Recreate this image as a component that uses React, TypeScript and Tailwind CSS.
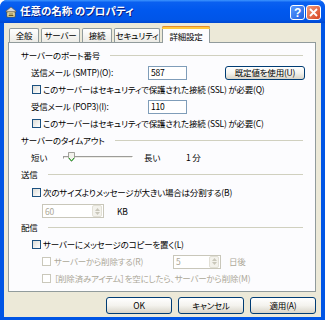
import React from "react";

function Check({ disabled }: { disabled?: boolean }) {
  return (
    <span
      className={
        disabled
          ? "inline-block w-[9px] h-[9px] shrink-0 border border-[#CAC8BB] bg-white"
          : "inline-block w-[9px] h-[9px] shrink-0 border border-[#1C5180] bg-gradient-to-br from-[#DCDCD7] to-white"
      }
    />
  );
}

function GroupHeader({ label, h }: { label: string; h: string }) {
  return (
    <div className={"flex items-center pl-[12px] pr-[12px] " + h}>
      <span className="whitespace-nowrap">{label}</span>
      <div className="flex-1 h-px bg-[#D0D0BF] ml-[10px]" />
    </div>
  );
}

function XPButton({ label, w }: { label: string; w: string }) {
  return (
    <div
      className={
        "rounded-[3px] border border-[#003C74] bg-gradient-to-b from-white via-[#F4F3EE] to-[#D8D4C8] flex items-center justify-center whitespace-nowrap " +
        w
      }
    >
      {label}
    </div>
  );
}

function Spinner({ value, w }: { value: string; w: string }) {
  return (
    <div className={"h-[14px] border border-[#C9C7BA] bg-white flex items-center " + w}>
      <span className="flex-1 pl-[2px] text-[#ACA899]">{value}</span>
      <div className="w-[10px] h-[12px] mr-px bg-[#F3F2EC] border border-[#E2E0D6] rounded-[2px] flex flex-col items-center justify-center gap-[1px]">
        <svg width="5" height="3" viewBox="0 0 5 3"><path d="M0 3 L2.5 0 L5 3 Z" fill="#C9C7BA" /></svg>
        <svg width="5" height="3" viewBox="0 0 5 3"><path d="M0 0 L2.5 3 L5 0 Z" fill="#C9C7BA" /></svg>
      </div>
    </div>
  );
}

const tabs = [
  { t: "全般", w: "w-[30px]" },
  { t: "サーバー", w: "w-[39px]" },
  { t: "接続", w: "w-[30px]" },
  { t: "セキュリティ", w: "w-[46px]" },
];

export default function App() {
  return (
    <div className="w-[325px] h-[320px] bg-[#0055E5] rounded-t-[7px] overflow-hidden flex flex-col text-[8.5px] tracking-[-0.2px] leading-none text-black font-['Noto_Sans_CJK_JP','Noto_Sans',sans-serif] [font-feature-settings:'palt']">
      {/* Title bar */}
      <div className="h-[23px] shrink-0 flex items-start pl-[5px] pr-[4px] bg-[linear-gradient(to_bottom,#3D95FF_0%,#0A60F0_10%,#0058EE_45%,#0055E8_85%,#0047CF_100%)]">
        <svg width="12" height="12" viewBox="0 0 12 12" className="shrink-0 mt-[6px]">
          <path d="M1 5 L6 1 L11 5 L11 6 L1 6 Z" fill="#D9D9D9" stroke="#555" strokeWidth="0.7" />
          <rect x="2" y="6" width="8" height="5" fill="#FFF6C8" stroke="#6B5A20" strokeWidth="0.7" />
          <rect x="3.5" y="7.5" width="5" height="1" fill="#6B5A20" />
          <rect x="3.5" y="9" width="5" height="1" fill="#6B5A20" />
        </svg>
        <span className="ml-[3px] mt-[6px] text-white font-bold text-[10.5px] tracking-[0px] whitespace-nowrap [text-shadow:1px_1px_0_#0A1E80]">
          任意の名称 のプロパティ
        </span>
        <div className="flex-1" />
        <div className="mt-[5px] w-[15px] h-[15px] rounded-[3px] border border-white bg-gradient-to-br from-[#5B9BFF] to-[#1E5FE0] flex items-center justify-center text-white font-bold text-[12px] font-['Liberation_Sans',sans-serif]">
          ?
        </div>
        <div className="mt-[5px] w-[15px] h-[15px] ml-px rounded-[3px] border border-white bg-gradient-to-br from-[#F09A7A] to-[#D6401A] flex items-center justify-center">
          <svg width="9" height="9" viewBox="0 0 9 9">
            <path d="M1 1 L8 8 M8 1 L1 8" stroke="white" strokeWidth="1.8" />
          </svg>
        </div>
      </div>

      {/* Body */}
      <div className="flex-1 mx-[4px] mb-[3px] bg-[#ECE9D8] flex flex-col pl-[4px] pr-[5px]">
        {/* Tabs */}
        <div className="h-[19px] flex items-end pl-px">
          {tabs.map((tab) => (
            <div
              key={tab.t}
              className={
                "h-[14px] mr-[2px] border border-b-0 border-[#919B9C] rounded-t-[2px] bg-gradient-to-b from-white to-[#ECEBE6] flex items-center justify-center whitespace-nowrap " +
                tab.w
              }
            >
              {tab.t}
            </div>
          ))}
          <div className="relative h-[17px] w-[48px] -mb-px border border-b-0 border-[#919B9C] rounded-t-[2px] bg-[#FCFCFE] flex items-center justify-center z-10">
            <div className="absolute -top-px -left-px -right-px h-[3px] rounded-t-[2px] bg-[#FFC83C] border-t border-[#E68B2C]" />
            <span className="mt-[2px]">詳細設定</span>
          </div>
        </div>

        {/* Panel */}
        <div className="h-[250px] border border-[#919B9C] bg-[#FCFCFE] flex flex-col pt-[4px]">
          <GroupHeader label="サーバーのポート番号" h="h-[17px]" />
          <div className="h-[17px] flex items-center pl-[22px]">
            <span className="w-[117px] whitespace-nowrap">送信メール (SMTP)(O):</span>
            <div className="w-[39px] h-[14px] border border-[#7F9DB9] bg-white flex items-center pl-[2px]">587</div>
            <div className="w-[38px]" />
            <XPButton label="既定値を使用(U)" w="w-[80px] h-[14px]" />
          </div>
          <div className="h-[17px] flex items-center pl-[23px] gap-[2px] whitespace-nowrap">
            <Check />
            <span>このサーバーはセキュリティで保護された接続 (SSL) が必要(Q)</span>
          </div>
          <div className="h-[17px] flex items-center pl-[22px]">
            <span className="w-[117px] whitespace-nowrap">受信メール (POP3)(I):</span>
            <div className="w-[39px] h-[14px] border border-[#7F9DB9] bg-white flex items-center pl-[2px]">110</div>
          </div>
          <div className="h-[17px] flex items-center pl-[23px] gap-[2px] whitespace-nowrap">
            <Check />
            <span>このサーバーはセキュリティで保護された接続 (SSL) が必要(C)</span>
          </div>
          <GroupHeader label="サーバーのタイムアウト" h="h-[16px]" />
          <div className="h-[18px] flex items-center pl-[22px] whitespace-nowrap">
            <span className="w-[32px]">短い</span>
            <div className="relative w-[70px] h-[10px] flex items-center">
              <div className="w-full h-[3px] border border-[#9D9C99] border-b-white border-r-white bg-[#ECEBE6]" />
              <svg className="absolute left-[5px] top-0" width="7" height="10" viewBox="0 0 7 10">
                <path d="M0.5 0.5 H6.5 V6 L3.5 9.5 L0.5 6 Z" fill="#F3F2EC" stroke="#8C8B85" strokeWidth="0.8" />
                <path d="M1 6 L3.5 9 L6 6" fill="none" stroke="#21A121" strokeWidth="1" />
              </svg>
            </div>
            <span className="ml-[11px] w-[42px]">長い</span>
            <span>1 分</span>
          </div>
          <GroupHeader label="送信" h="h-[16px]" />
          <div className="h-[21px] flex items-center pl-[23px] gap-[2px] whitespace-nowrap">
            <Check />
            <span>次のサイズよりメッセージが大きい場合は分割する(B)</span>
          </div>
          <div className="h-[16px] flex items-center pl-[33px] whitespace-nowrap">
            <Spinner value="60" w="w-[62px]" />
            <span className="ml-[13px]">KB</span>
          </div>
          <GroupHeader label="配信" h="h-[16px]" />
          <div className="h-[18px] flex items-center pl-[23px] gap-[2px] whitespace-nowrap">
            <Check />
            <span>サーバーにメッセージのコピーを置く(L)</span>
          </div>
          <div className="h-[17px] flex items-center pl-[33px] whitespace-nowrap text-[#ACA899]">
            <Check disabled />
            <span className="ml-[3px] w-[119px]">サーバーから削除する(R)</span>
            <Spinner value="5" w="w-[48px]" />
            <span className="ml-[8px]">日後</span>
          </div>
          <div className="h-[17px] flex items-center pl-[33px] gap-[3px] whitespace-nowrap text-[#ACA899]">
            <Check disabled />
            <span>［削除済みアイテム］を空にしたら、サーバーから削除(M)</span>
          </div>
        </div>

        {/* Buttons */}
        <div className="flex-1 flex items-center justify-end gap-[6px] pt-[1px]">
          <XPButton label="OK" w="w-[66px] h-[17px]" />
          <XPButton label="キャンセル" w="w-[66px] h-[17px]" />
          <XPButton label="適用(A)" w="w-[66px] h-[17px]" />
        </div>
      </div>
    </div>
  );
}
